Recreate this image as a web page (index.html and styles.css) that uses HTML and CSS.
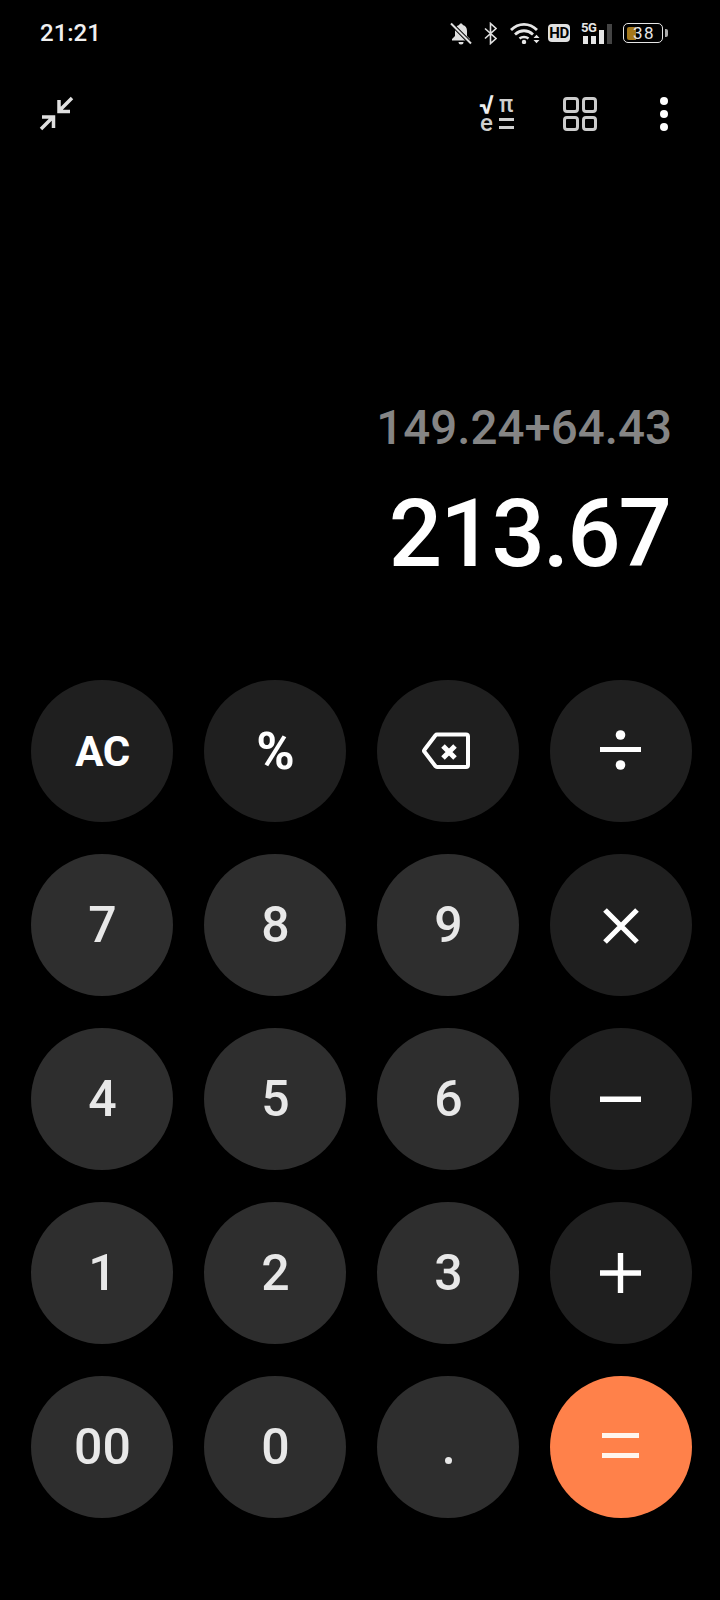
FILE: index.html
```html
<!DOCTYPE html>
<html lang="en">
<head>
    <meta charset="UTF-8">
    <meta name="viewport" content="width=device-width, initial-scale=1.0">
    <title>Calculator</title>
    <link rel="stylesheet" href="styles.css">
</head>
<body>
    <div class="screen">
        <div class="status-bar">
            <span class="clock">21:21</span>
            <div class="status-icons">
                <!-- bell muted -->
                <svg class="icon-bell" viewBox="0 0 22 23">
                    <path d="M11 1.500c-1 0-1.700.7-1.800 1.600C6.500 3.800 5 6 5 9v5l-3 3v1.500h18V17l-3-3V9c0-3-1.500-5.200-4.200-5.900-.1-.9-.8-1.600-1.800-1.600z" fill="#e0e0e0"/>
                    <path d="M8.500 20h5a2.500 2.500 0 0 1-5 0z" fill="#e0e0e0"/>
                    <path d="M1 1.500l20 20" stroke="#000" stroke-width="4"/>
                    <path d="M1 1.500l20 20" stroke="#e0e0e0" stroke-width="2"/>
                </svg>
                <!-- bluetooth -->
                <svg class="icon-bt" viewBox="0 0 13 23">
                    <path d="M1 6.500l11 10-5.500 5V1.500l5.500 5-11 10" fill="none" stroke="#e0e0e0" stroke-width="1.600"/>
                </svg>
                <!-- wifi -->
                <svg class="icon-wifi" viewBox="0 0 30 22">
                    <path d="M1 8C8.500 .5 19.500 .5 27 8" fill="none" stroke="#e6e6e6" stroke-width="2.800"/>
                    <path d="M5 12.500C10.500 7.500 17.500 7.500 23 12.500" fill="none" stroke="#e6e6e6" stroke-width="2.800"/>
                    <path d="M9.500 16.500C12 14.500 16 14.500 18.500 16.500" fill="none" stroke="#e6e6e6" stroke-width="2.500"/>
                    <circle cx="14" cy="20" r="2.200" fill="#e6e6e6"/>
                    <path d="M23.500 16h6l-3-3.200zM23.500 18h6l-3 3.200z" fill="#e6e6e6"/>
                </svg>
                <span class="hd-badge">HD</span>
                <div class="signal">
                    <span class="signal-label">5G</span>
                    <div class="signal-bars">
                        <i class="bar bar-1"></i>
                        <i class="bar bar-2"></i>
                        <i class="bar bar-3"></i>
                        <i class="bar bar-4"></i>
                    </div>
                </div>
                <div class="battery">
                    <div class="battery-body">
                        <i class="battery-fill"></i>
                        <span class="battery-level">38</span>
                    </div>
                    <i class="battery-tip"></i>
                </div>
            </div>
        </div>

        <div class="toolbar">
            <svg class="icon-collapse" viewBox="0 0 36 36">
                <path d="M34 2L21 15M21 4V15.500H32M3 33L15 21M4 21H15.500V32" fill="none" stroke="#e0e0e0" stroke-width="3.500"/>
            </svg>
            <div class="toolbar-right">
                <div class="sci-toggle">
                    <span class="sci-root">√</span>
                    <span class="sci-pi">π</span>
                    <span class="sci-e">e</span>
                    <span class="sci-equals"><i></i><i></i></span>
                </div>
                <div class="grid-icon"><i></i><i></i><i></i><i></i></div>
                <div class="dots-icon"><i></i><i></i><i></i></div>
            </div>
        </div>

        <div class="display">
            <div class="expression">149.24+64.43</div>
            <div class="result">213.67</div>
        </div>

        <div class="keypad">
            <div class="key key-fn key-label">AC</div>
            <div class="key key-fn key-percent">%</div>
            <div class="key key-fn">
                <svg class="icon-back" viewBox="0 0 48 38">
                    <path d="M15 2.500H44a2 2 0 0 1 2 2V33a2 2 0 0 1-2 2H15a2 2 0 0 1-1.500-.7L2.500 19.800a1.500 1.500 0 0 1 0-2L13.500 3.200a2 2 0 0 1 1.500-.7z" fill="none" stroke="#fff" stroke-width="4"/>
                    <path d="M21 14l12 12M33 14L21 26" fill="none" stroke="#fff" stroke-width="5"/>
                </svg>
            </div>
            <div class="key key-fn">
                <svg class="icon-op" viewBox="0 0 44 44">
                    <rect x="1" y="18" width="41" height="5" fill="#fff"/>
                    <circle cx="21.500" cy="6" r="4.800" fill="#fff"/>
                    <circle cx="21.500" cy="36" r="4.800" fill="#fff"/>
                </svg>
            </div>

            <div class="key">7</div>
            <div class="key">8</div>
            <div class="key">9</div>
            <div class="key key-fn">
                <svg class="icon-op" viewBox="0 0 44 44">
                    <path d="M6 7l32 32M38 7L6 39" stroke="#fff" stroke-width="5.200"/>
                </svg>
            </div>

            <div class="key">4</div>
            <div class="key">5</div>
            <div class="key">6</div>
            <div class="key key-fn">
                <svg class="icon-op" viewBox="0 0 44 44">
                    <rect x="1" y="19.500" width="41" height="5.500" fill="#fff"/>
                </svg>
            </div>

            <div class="key">1</div>
            <div class="key">2</div>
            <div class="key">3</div>
            <div class="key key-fn">
                <svg class="icon-op" viewBox="0 0 44 44">
                    <path d="M1 22h41M21.500 2v40" stroke="#fff" stroke-width="5.400"/>
                </svg>
            </div>

            <div class="key">00</div>
            <div class="key">0</div>
            <div class="key">
                <i class="key-dot"></i>
            </div>
            <div class="key key-equals">
                <svg class="icon-op" viewBox="0 0 44 44">
                    <path d="M3 10.500h37M3 30.500h37" stroke="#fff5ee" stroke-width="5"/>
                </svg>
            </div>
        </div>
    </div>
</body>
</html>
```

FILE: styles.css
```css
* {
    box-sizing: border-box;
}
body {
    margin: 0;
    background-color: #000;
    font-family: Roboto, "Noto Sans", sans-serif;
}
.screen {
    width: 720px;
    height: 1600px;
    overflow: hidden;
    background-color: #000;
    display: flex;
    flex-direction: column;
}

/* status bar */
.status-bar {
    height: 66px;
    padding: 0 52px 0 40px;
    display: flex;
    align-items: center;
    justify-content: space-between;
}
.clock {
    color: #f0f0f0;
    font-size: 24px;
    font-weight: 500;
}
.status-icons {
    display: flex;
    align-items: center;
}
.icon-bell {
    width: 22px;
    height: 23px;
    margin-right: 12px;
}
.icon-bt {
    width: 13px;
    height: 23px;
    margin-right: 13px;
}
.icon-wifi {
    width: 30px;
    height: 22px;
    margin-right: 8px;
}
.hd-badge {
    width: 22px;
    height: 18px;
    background-color: #e0e0e0;
    border-radius: 4px;
    color: #000;
    font-size: 15px;
    line-height: 18px;
    font-weight: 700;
    text-align: center;
    letter-spacing: -0.5px;
    margin-right: 11px;
}
.signal {
    position: relative;
    width: 31px;
    height: 22px;
    margin-right: 11px;
}
.signal-label {
    position: absolute;
    top: -1px;
    left: 0;
    color: #e6e6e6;
    font-size: 13px;
    line-height: 13px;
    font-weight: 700;
    letter-spacing: -0.5px;
}
.signal-bars {
    height: 100%;
    padding-left: 2px;
    display: flex;
    align-items: flex-end;
    gap: 3.500px;
}
.bar {
    width: 4.500px;
    background-color: #e6e6e6;
}
.bar-1 {
    height: 8px;
}
.bar-2 {
    height: 8px;
}
.bar-3 {
    height: 14px;
}
.bar-4 {
    height: 20px;
    background-color: #444;
}
.battery {
    display: flex;
    align-items: center;
    gap: 2px;
}
.battery-body {
    position: relative;
    width: 40px;
    height: 20px;
    border: 1.500px solid #e6e6e6;
    border-radius: 5px;
    display: flex;
    align-items: center;
    padding-left: 9px;
}
.battery-fill {
    position: absolute;
    left: 2.500px;
    top: 2.500px;
    bottom: 2.500px;
    width: 9px;
    background-color: #a5791c;
    border-radius: 2px 0 0 2px;
}
.battery-level {
    position: relative;
    color: #e6e6e6;
    font-size: 17px;
    letter-spacing: 1.500px;
}
.battery-tip {
    width: 3px;
    height: 8px;
    background-color: #aaa;
    border-radius: 0 2px 2px 0;
}

/* toolbar */
.toolbar {
    height: 96px;
    padding: 0 52px 0 38px;
    display: flex;
    align-items: center;
    justify-content: space-between;
}
.icon-collapse {
    width: 36px;
    height: 36px;
}
.toolbar-right {
    display: flex;
    align-items: center;
}
.sci-toggle {
    width: 36px;
    margin-right: 48px;
    display: grid;
    grid-template-columns: 20px 16px;
    grid-auto-rows: 18px;
    color: #dcdcdc;
    font-weight: 500;
    line-height: 18px;
}
.sci-root {
    font-size: 26px;
    font-weight: 700;
    color: #eee;
}
.sci-pi {
    font-size: 23px;
    color: #cfcfcf;
}
.sci-e {
    font-size: 24px;
    padding-left: 1px;
    color: #cfcfcf;
}
.sci-equals {
    display: flex;
    flex-direction: column;
    justify-content: center;
    gap: 5px;
}
.sci-equals i {
    height: 3px;
    width: 15px;
    background-color: #cfcfcf;
}
.grid-icon {
    width: 34px;
    height: 34px;
    margin-right: 63px;
    display: grid;
    grid-template-columns: 1fr 1fr;
    gap: 3px;
}
.grid-icon i {
    border: 3.500px solid #cccccc;
    border-radius: 4px;
}
.dots-icon {
    display: flex;
    flex-direction: column;
    gap: 5px;
}
.dots-icon i {
    width: 8px;
    height: 8px;
    border-radius: 50%;
    background-color: #fff;
}

/* display */
.display {
    height: 518px;
    padding: 0 48px 92px 0;
    display: flex;
    flex-direction: column;
    align-items: flex-end;
    justify-content: flex-end;
}
.expression {
    color: #858585;
    font-size: 47.500px;
    font-weight: 500;
    line-height: 56px;
    margin-bottom: 24px;
}
.result {
    color: #fff;
    font-size: 94px;
    font-weight: 500;
    line-height: 108px;
    letter-spacing: -2px;
    margin-right: 2px;
}

/* keypad */
.keypad {
    padding: 0 28px 0 31px;
    display: grid;
    grid-template-columns: repeat(4, 142px);
    column-gap: 31px;
    row-gap: 32px;
}
.key {
    width: 142px;
    height: 142px;
    padding-left: 1px;
    border-radius: 50%;
    background-color: #2e2e2e;
    color: #e8e8e8;
    font-size: 50px;
    font-weight: 500;
    display: flex;
    align-items: center;
    justify-content: center;
}
.key-fn {
    background-color: #1f1f1f;
    color: #fff;
}
.key-label {
    font-size: 42px;
    font-weight: 700;
    letter-spacing: -0.5px;
}
.key-percent {
    font-size: 52px;
    font-weight: 700;
}
.key-equals {
    background-color: #ff814a;
}
.key-dot {
    width: 7px;
    height: 7px;
    margin-top: 27px;
    border-radius: 50%;
    background-color: #e8e8e8;
}
.icon-back {
    width: 48px;
    height: 38px;
    margin-right: 6px;
}
.icon-op {
    width: 44px;
    height: 44px;
    margin-right: 2px;
}
```
